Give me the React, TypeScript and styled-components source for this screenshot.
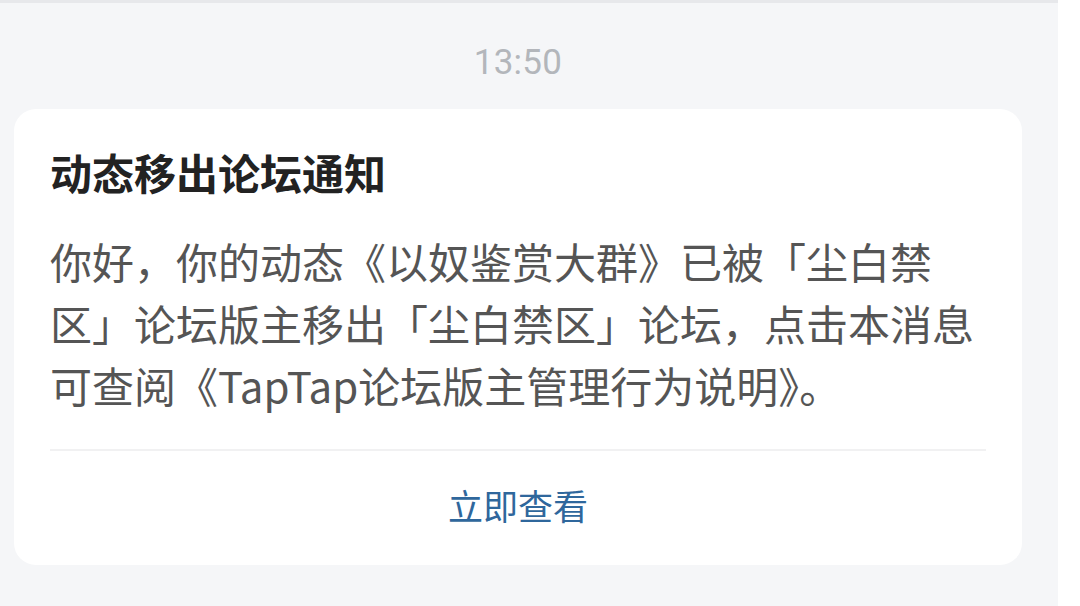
import React from "react";
import styled, { createGlobalStyle } from "styled-components";

const Global = createGlobalStyle`
  html, body { margin: 0; padding: 0; background: #ffffff; }
  body { width: 1080px; height: 606px; overflow: hidden; font-family: "Noto Sans CJK SC", "Noto Sans", sans-serif; }
`;

const Page = styled.div`
  display: flex;
  width: 1080px;
  height: 606px;
`;

const Main = styled.div`
  width: 1058px;
  height: 606px;
  background: #f5f6f8;
  border-top: 3px solid #e7e8eb;
  box-sizing: border-box;
  padding: 0 36px 0 14px;
  display: flex;
  flex-direction: column;
`;

const Side = styled.div`
  flex: 1;
  background: #ffffff;
`;

const Time = styled.div`
  height: 106px;
  display: flex;
  align-items: center;
  justify-content: center;
  padding-top: 12px;
  box-sizing: border-box;
  font-family: Roboto, "Noto Sans", sans-serif;
  font-size: 35px;
  color: #b3b6bb;
  letter-spacing: 0.3px;
`;

const Card = styled.div`
  background: #ffffff;
  border-radius: 22px;
  padding: 38px 36px 0 36px;
  display: flex;
  flex-direction: column;
`;

const Title = styled.div`
  font-size: 42px;
  line-height: 50px;
  font-weight: 700;
  color: #222222;
`;

const Body = styled.div`
  margin-top: 33px;
  font-size: 42px;
  line-height: 62px;
  color: #555555;
  line-break: strict;
`;

const Divider = styled.div`
  margin-top: 33px;
  height: 2px;
  background: #f1f1f2;
`;

const Action = styled.div`
  height: 114px;
  display: flex;
  align-items: center;
  justify-content: center;
  padding-bottom: 8px;
  box-sizing: border-box;
  font-size: 35px;
  color: #2f679c;
`;

export default function App() {
  return (
    <Page>
      <Global />
      <Main>
        <Time>13:50</Time>
        <Card>
          <Title>动态移出论坛通知</Title>
          <Body>
            你好，你的动态《以奴鉴赏大群》已被「尘白禁区」论坛版主移出「尘白禁区」论坛，点击本消息可查阅《TapTap论坛版主管理行为说明》。
          </Body>
          <Divider />
          <Action>立即查看</Action>
        </Card>
      </Main>
      <Side />
    </Page>
  );
}
